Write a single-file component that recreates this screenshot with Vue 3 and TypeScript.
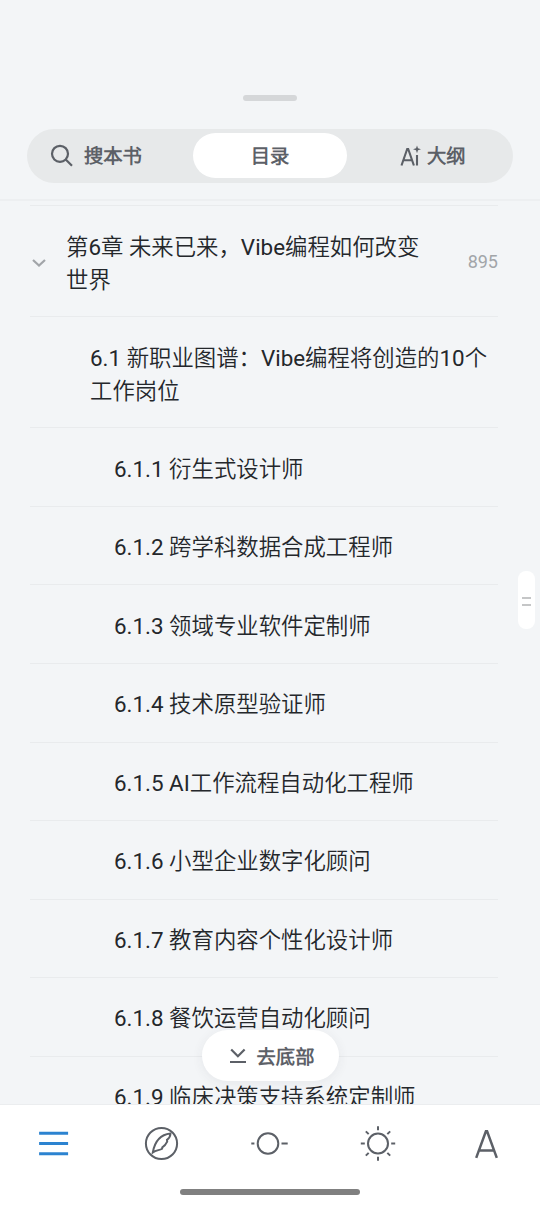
<script setup lang="ts">
interface Entry {
  level: number
  lines: string[]
  page?: number
}

const entries: Entry[] = [
  { level: 1, lines: ['第6章 未来已来，Vibe编程如何改变', '世界'], page: 895 },
  { level: 2, lines: ['6.1 新职业图谱：Vibe编程将创造的10个', '工作岗位'] },
  { level: 3, lines: ['6.1.1 衍生式设计师'] },
  { level: 3, lines: ['6.1.2 跨学科数据合成工程师'] },
  { level: 3, lines: ['6.1.3 领域专业软件定制师'] },
  { level: 3, lines: ['6.1.4 技术原型验证师'] },
  { level: 3, lines: ['6.1.5 AI工作流程自动化工程师'] },
  { level: 3, lines: ['6.1.6 小型企业数字化顾问'] },
  { level: 3, lines: ['6.1.7 教育内容个性化设计师'] },
  { level: 3, lines: ['6.1.8 餐饮运营自动化顾问'] },
  { level: 3, lines: ['6.1.9 临床决策支持系统定制师'] },
]
const rays = [0, 45, 90, 135, 180, 225, 270, 315]
</script>

<template>
  <div class="screen">
    <header class="header">
      <div class="grip"></div>
      <div class="tabs">
        <div class="tab search">
          <svg class="search-icon" width="24" height="24" viewBox="0 0 24 24">
            <circle cx="10" cy="9.8" r="8" />
            <path d="M15.7 15.5L22 21.8" />
          </svg>
          <span>搜本书</span>
        </div>
        <div class="tab active"><span>目录</span></div>
        <div class="tab outline">
          <svg class="ai-icon" width="22" height="22" viewBox="0 0 22 22">
            <path class="stroke" d="M1.5 20.5L7.2 4H8.2L13.9 20.5M3.7 15.2H11.7M17 10V20.5" />
            <path class="fill" d="M17 .4L18 3.3L21 4.3L18 5.3L17 8.2L16 5.3L13 4.3L16 3.3Z" />
          </svg>
          <span>大纲</span>
        </div>
      </div>
    </header>

    <main class="contents">
      <div class="list">
        <div v-for="entry in entries" :key="entry.lines[0]" class="row" :class="'level-' + entry.level">
          <svg v-if="entry.page" class="chevron" width="16" height="10" viewBox="0 0 16 10">
            <path d="M2 2L8 7.6L14 2" />
          </svg>
          <div class="title">
            <div v-for="line in entry.lines" :key="line">{{ line }}</div>
          </div>
          <span v-if="entry.page" class="page">{{ entry.page }}</span>
        </div>
      </div>
      <div class="scroll-thumb"><i></i><i></i></div>
      <button class="to-bottom">
        <svg width="18" height="18" viewBox="0 0 18 18">
          <path d="M2.2 2.4L8.9 9.2L15.6 2.4M1 15H17" />
        </svg>
        <span>去底部</span>
      </button>
    </main>

    <footer class="footer">
      <nav class="nav">
        <svg class="nav-icon menu" width="36" height="36" viewBox="-18 -18.5 36 36">
          <path d="M-14.9 -10.2H14.1M-14.9 0H14.1M-14.9 10.2H14.1" />
        </svg>
        <svg class="nav-icon" width="36" height="36" viewBox="-17.5 -18.5 36 36">
          <circle r="15.6" />
          <path d="M-8.7 9C-6.9 -1.5 -2.2 -8.8 9 -10C8.8 -7 7.4 -5 5.5 -3.7L5.7 -1.8C4.3 1.2 2.6 2.8 .8 3.8L.6 5.2C-2 7 -5.2 6.3 -8.7 9Z" />
        </svg>
        <svg class="nav-icon" width="36" height="36" viewBox="-18 -18.5 36 36">
          <circle cx="-2" r="10.3" />
          <path d="M-18.7 0H-15.6M11.5 0H17.7" />
        </svg>
        <svg class="nav-icon" width="36" height="36" viewBox="-18 -18.5 36 36">
          <circle r="10" />
          <path v-for="angle in rays" :key="angle" d="M13.2 0H17.2" :transform="`rotate(${angle})`" />
        </svg>
        <svg class="nav-icon" width="36" height="36" viewBox="-18.5 -18.5 36 36">
          <path class="letter" d="M-10.3 14.4L-.6 -12.2H.6L10.3 14.4M-7 7H7" />
        </svg>
      </nav>
      <div class="home-bar"></div>
    </footer>
  </div>
</template>

<style>
body {
  margin: 0;
}
</style>

<style scoped>
.screen {
  display: flex;
  flex-direction: column;
  width: 540px;
  height: 1206px;
  overflow: hidden;
  background: #f3f5f7;
  color: #24272b;
  font-family: Roboto, "Noto Sans CJK SC DemiLight", "Noto Sans CJK SC", sans-serif;
}
.header {
  box-sizing: border-box;
  flex: none;
  height: 201px;
  padding: 95px 27px 0;
  border-bottom: 2px solid #edeff1;
}
.grip {
  width: 54px;
  height: 6px;
  margin: 0 auto 27.5px;
  border-radius: 3px;
  background: #d5d7d9;
}
.tabs {
  display: grid;
  grid-template-columns: 1fr 154px 1fr;
  box-sizing: border-box;
  height: 54px;
  padding: 4.5px 0;
  border-radius: 27px;
  background: #e7e9ea;
  color: #5c6067;
  font-size: 19.3px;
  font-weight: 700;
}
.tab {
  display: flex;
  align-items: center;
  line-height: 28px;
}
.tab span {
  padding-top: 2px;
}
.search {
  padding-left: 23px;
}
.search-icon {
  margin-right: 10px;
  fill: none;
  stroke: #5c6067;
  stroke-width: 2.2;
}
.active {
  justify-content: center;
  border-radius: 23px;
  background: #fff;
}
.outline {
  padding-left: 53px;
}
.ai-icon {
  margin-right: 5px;
}
.ai-icon .stroke {
  fill: none;
  stroke: #5c6067;
  stroke-width: 2.1;
}
.ai-icon .fill {
  fill: #5c6067;
}
.contents {
  position: relative;
  flex: none;
  height: 903px;
  overflow: hidden;
}
.list {
  margin: 4px 42px 0 30px;
  border-top: 1px solid #e9ebed;
}
.row {
  display: flex;
  align-items: center;
  box-sizing: border-box;
  height: 78.55px;
  padding-top: 3.5px;
  border-bottom: 1px solid #e9ebed;
  font-size: 22.4px;
  line-height: 32.7px;
  white-space: nowrap;
}
.level-1,
.level-2 {
  height: 111.2px;
}
.level-1 .title {
  padding-top: 2px;
}
.level-2 {
  padding-top: 5px;
  padding-left: 60px;
}
.level-3 {
  padding-left: 84px;
}
.chevron {
  margin: 0 19px 0 1px;
  fill: none;
  stroke: #a2a5a9;
  stroke-width: 2.2;
}
.page {
  margin-left: auto;
  color: #a2a5a9;
  font-size: 18px;
}
.scroll-thumb {
  position: absolute;
  top: 370px;
  right: 5px;
  display: flex;
  flex-direction: column;
  align-items: center;
  justify-content: center;
  gap: 5px;
  width: 17px;
  height: 58px;
  padding-top: 3px;
  box-sizing: border-box;
  border-radius: 8px;
  background: #fff;
}
.scroll-thumb i {
  width: 9px;
  height: 2px;
  background: #c5c6c7;
}
.to-bottom {
  position: absolute;
  top: 829px;
  left: 202px;
  display: flex;
  align-items: center;
  justify-content: center;
  gap: 10px;
  width: 137px;
  height: 51px;
  padding: 0 0 0 2px;
  border: 0;
  border-radius: 26px;
  background: #fff;
  box-shadow: 0 2px 12px rgba(50, 60, 70, 0.07);
  color: #5c6067;
  font: inherit;
  font-size: 19.3px;
  font-weight: 700;
}
.to-bottom svg {
  fill: none;
  stroke: #5c6067;
  stroke-width: 2.2;
}
.footer {
  flex: 1;
  background: #fff;
  border-top: 1px solid #ebedef;
}
.nav {
  display: flex;
  justify-content: space-between;
  padding: 20px 36px 0;
}
.nav-icon {
  overflow: visible;
  fill: none;
  stroke: #5c6067;
  stroke-width: 2;
}
.menu {
  stroke: #2c83d0;
  stroke-width: 3;
}
.letter {
  stroke-width: 2.5;
}
.home-bar {
  width: 180px;
  height: 6px;
  margin: 28px auto 0;
  border-radius: 3px;
  background: #808080;
}
</style>
